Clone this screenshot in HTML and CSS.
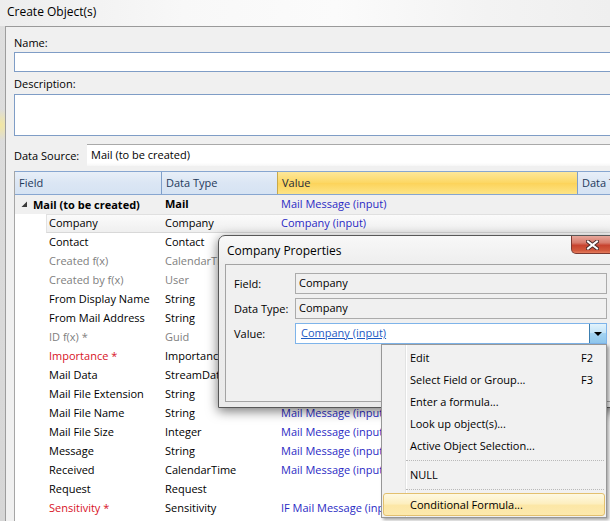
FILE: index.html
```html
<!DOCTYPE html>
<html>
<head>
<meta charset="utf-8">
<title>Create Object(s)</title>
<link rel="stylesheet" href="styles.css">
</head>
<body>
<div class="win">
  <div class="titlebar">Create Object(s)</div>
  <div class="client">
    <div class="lbl lbl-name">Name:</div>
    <div class="input"></div>
    <div class="lbl lbl-desc">Description:</div>
    <div class="textarea"></div>
    <div class="ds-row">
      <span class="ds-label">Data Source:</span>
      <div class="combo">Mail (to be created)</div>
    </div>
    <div class="grid">
      <div class="hdr">
        <div class="hc">Field</div>
        <div class="hc sep">Data Type</div>
        <div class="hc sep active">Value</div>
        <div class="hc sep">Data Type</div>
      </div>
      <div class="row group">
        <div class="cell f top"><svg class="arrow" width="7" height="7" viewBox="0 0 7 7"><polygon points="6,0.5 6,6 0.5,6" fill="#3a3a3a"/></svg><b>Mail (to be created)</b></div>
        <div class="cell t"><b>Mail</b></div>
        <div class="cell v">Mail Message (input)</div>
        <div class="cell"></div>
      </div>
      <div class="row sel">
        <div class="cell f">Company</div><div class="cell t">Company</div><div class="cell v">Company (input)</div><div class="cell"></div>
      </div>
      <div class="row">
        <div class="cell f">Contact</div><div class="cell t">Contact</div><div class="cell v"></div><div class="cell"></div>
      </div>
      <div class="row gray">
        <div class="cell f">Created f(x)</div><div class="cell t">CalendarTime</div><div class="cell v"></div><div class="cell"></div>
      </div>
      <div class="row gray">
        <div class="cell f">Created by f(x)</div><div class="cell t">User</div><div class="cell v"></div><div class="cell"></div>
      </div>
      <div class="row">
        <div class="cell f">From Display Name</div><div class="cell t">String</div><div class="cell v"></div><div class="cell"></div>
      </div>
      <div class="row">
        <div class="cell f">From Mail Address</div><div class="cell t">String</div><div class="cell v"></div><div class="cell"></div>
      </div>
      <div class="row gray">
        <div class="cell f">ID f(x) *</div><div class="cell t">Guid</div><div class="cell v"></div><div class="cell"></div>
      </div>
      <div class="row">
        <div class="cell f red">Importance *</div><div class="cell t">Importance</div><div class="cell v"></div><div class="cell"></div>
      </div>
      <div class="row">
        <div class="cell f">Mail Data</div><div class="cell t">StreamData</div><div class="cell v"></div><div class="cell"></div>
      </div>
      <div class="row">
        <div class="cell f">Mail File Extension</div><div class="cell t">String</div><div class="cell v"></div><div class="cell"></div>
      </div>
      <div class="row">
        <div class="cell f">Mail File Name</div><div class="cell t">String</div><div class="cell v">Mail Message (input)</div><div class="cell"></div>
      </div>
      <div class="row">
        <div class="cell f">Mail File Size</div><div class="cell t">Integer</div><div class="cell v">Mail Message (input)</div><div class="cell"></div>
      </div>
      <div class="row">
        <div class="cell f">Message</div><div class="cell t">String</div><div class="cell v">Mail Message (input)</div><div class="cell"></div>
      </div>
      <div class="row">
        <div class="cell f">Received</div><div class="cell t">CalendarTime</div><div class="cell v">Mail Message (input)</div><div class="cell"></div>
      </div>
      <div class="row">
        <div class="cell f">Request</div><div class="cell t">Request</div><div class="cell v"></div><div class="cell"></div>
      </div>
      <div class="row">
        <div class="cell f red">Sensitivity *</div><div class="cell t">Sensitivity</div><div class="cell v">IF Mail Message (input)</div><div class="cell"></div>
      </div>
    </div>
  </div>

  <div class="popup">
    <div class="popup-title">Company Properties</div>
    <div class="close"><svg width="13" height="10" viewBox="0 0 13 10"><path d="M2 1.5 L11 8.5 M11 1.5 L2 8.5" stroke="#4a2a28" stroke-width="4" stroke-linecap="square"/><path d="M2 1.5 L11 8.5 M11 1.5 L2 8.5" stroke="#ffffff" stroke-width="2" stroke-linecap="square"/></svg></div>
    <div class="inner">
      <div class="prow"><span class="plbl">Field:</span><div class="pbox">Company</div></div>
      <div class="prow"><span class="plbl">Data Type:</span><div class="pbox">Company</div></div>
      <div class="prow"><span class="plbl">Value:</span><div class="vcombo"><span class="vlink">Company (input)</span><span class="dd"><span class="tri"></span></span></div></div>
    </div>
  </div>

  <div class="menu">
    <div class="mi"><span>Edit</span><span class="sc">F2</span></div>
    <div class="mi"><span>Select Field or Group...</span><span class="sc">F3</span></div>
    <div class="mi"><span>Enter a formula...</span></div>
    <div class="mi"><span>Look up object(s)...</span></div>
    <div class="mi"><span>Active Object Selection...</span></div>
    <div class="msep"></div>
    <div class="mi"><span>NULL</span></div>
    <div class="msep"></div>
    <div class="mi hot"><span>Conditional Formula...</span></div>
  </div>
</div>
</body>
</html>
```
FILE: styles.css
```css
* { box-sizing: border-box; margin: 0; padding: 0; }
html, body { width: 610px; height: 521px; overflow: hidden; }
body {
  font-family: "Open Sans", "Noto Sans", sans-serif;
  font-size: 11px;
  color: #000;
  background: #dcdcdc;
}
.win {
  position: relative;
  width: 610px;
  height: 521px;
  overflow: hidden;
  background: radial-gradient(circle at 0 125px, #f3e7a0 0, rgba(243,231,160,0) 16px), linear-gradient(#dedede, #d6d6d6);
}
.titlebar {
  height: 26px;
  line-height: 24px;
  padding-left: 7px;
  font-size: 12px;
  background: linear-gradient(90deg, #ededed 0, #f8f8f8 30%, #fbfbfb 55%, #f3f3f3 80%, #efefef 100%);
}
.client {
  margin-left: 5px;
  width: 620px;
  height: 495px;
  border-top: 1px solid #9a9a9a;
  border-left: 1px solid #9d9d9d;
  background: #f0f0f0;
  padding: 7px 0 0 8px;
}
.lbl-name { line-height: 17px; margin-bottom: 1px; }
.lbl-desc { line-height: 16px; margin-top: 4px; margin-bottom: 2px; }
.input {
  height: 20px;
  background: #fff;
  border: 1px solid #7f9dc6;
}
.textarea {
  height: 42px;
  background: #fff;
  border: 1px solid #7f9dc6;
}
.ds-row {
  display: flex;
  align-items: center;
  padding-top: 8px;
  height: 30px;
  margin-bottom: 5px;
}
.ds-label { width: 73px; }
.combo {
  flex: 1;
  height: 22px;
  line-height: 20px;
  padding-left: 4px;
  background: linear-gradient(#ffffff, #ffffff 85%, #f6f6f6);
  border-top: 1px solid #a9a9a9;
}
.grid {
  border-left: 1px solid #a6a6a6;
  background: #fff;
  height: 360px;
}
.hdr, .row {
  display: grid;
  grid-template-columns: 146px 116px 300px 1fr;
}
.hdr {
  height: 24px;
  border-top: 1px solid #87a6d0;
  border-bottom: 1px solid #87a6d0;
  background: linear-gradient(#e8eff8, #dbe6f4 50%, #d6e3f3);
  color: #1e395b;
}
.hc {
  line-height: 21px;
  padding-left: 4px;
  white-space: nowrap;
  overflow: hidden;
}
.hc.sep { border-left: 1px solid #7f9fca; }
.hc.active {
  background: linear-gradient(#fde79a, #fcd762 50%, #fcd35a 51%, #fde486);
  border-left-color: #c9a94a;
  color: #1e2a3b;
}
.row {
  position: relative;
  height: 19px;
  line-height: 18px;
}
.row.group { background: #f0f0f0; }
.row.sel::before {
  content: "";
  position: absolute;
  left: 31px; right: 0; top: 0; bottom: 0;
  background: linear-gradient(#fbfbfb, #efefef);
  border-top: 1px solid #e0e0e0;
  border-bottom: 1px solid #d8d8d8;
  border-left: 1px solid #e2e2e2;
}
.cell {
  position: relative;
  white-space: nowrap;
  overflow: hidden;
  padding-left: 4px;
}
.cell.f { padding-left: 34px; }
.cell.f.top { padding-left: 6px; display: flex; align-items: center; }
.arrow { margin-right: 5px; flex: none; }
.cell.v { color: #2a2ac4; }
.row.gray .f, .row.gray .t { color: #808080; }
.cell.red { color: #d8131f; }

/* popup dialog */
.popup {
  position: absolute;
  left: 218px;
  top: 235px;
  width: 400px;
  height: 173px;
  border: 1px solid #575757;
  border-radius: 7px 7px 0 0;
  background: linear-gradient(#f8f8f8, #eeeeee 28px, #eaeaea);
  box-shadow: 0 3px 12px rgba(0,0,0,0.55);
  padding: 0 6px 6px 6px;
}
.popup-title {
  height: 28px;
  line-height: 29px;
  padding-left: 2px;
  font-size: 12px;
}
.close {
  position: absolute;
  left: 352px;
  top: 0;
  width: 43px;
  height: 18px;
  border: 1px solid #7c3a32;
  border-top: none;
  border-radius: 0 0 5px 5px;
  background: linear-gradient(#e7a79b, #d77b6c 40%, #c7432f 55%, #d25a3e 85%, #e47c5e);
  display: flex;
  align-items: center;
  justify-content: center;
}
.inner {
  height: 138px;
  border: 1px solid #a3a3a3;
  background: #f0f0f0;
  padding: 8px 0 0 8px;
  display: flex;
  flex-direction: column;
  gap: 4px;
}
.prow {
  display: flex;
  align-items: center;
  height: 21px;
}
.plbl { width: 61px; flex: none; }
.pbox {
  width: 312px;
  height: 21px;
  line-height: 18px;
  padding-left: 3px;
  background: #f0f0f0;
  border: 1px solid #ababab;
}
.vcombo {
  width: 312px;
  height: 21px;
  display: flex;
  background: #fff;
  border: 1px solid #7eb4ea;
}
.vlink {
  flex: 1;
  line-height: 18px;
  padding-left: 5px;
  color: #1e5ac3;
  text-decoration: underline;
}
.dd {
  width: 17px;
  border-left: 1px solid #3c7fb1;
  background: linear-gradient(#e3f3fc, #c4e4f8 45%, #a4d3f1 50%, #8fc6ec);
  display: flex;
  align-items: center;
  justify-content: center;
}
.tri {
  width: 0; height: 0;
  border-left: 4px solid transparent;
  border-right: 4px solid transparent;
  border-top: 4px solid #000;
}

/* context menu */
.menu {
  position: absolute;
  left: 381px;
  top: 344px;
  width: 226px;
  height: 174px;
  border: 1px solid #979797;
  padding: 2px;
  background: linear-gradient(90deg, rgba(0,0,0,0) 23px, #e2e3e3 23px, #e2e3e3 24px, #ffffff 24px, #ffffff 25px, rgba(0,0,0,0) 25px), #f1f1f1;
  box-shadow: 2px 2px 3px rgba(0,0,0,0.35);
}
.mi {
  height: 22px;
  line-height: 22px;
  padding: 0 11px 0 26px;
  display: flex;
  justify-content: space-between;
  white-space: nowrap;
}
.msep {
  height: 7px;
  margin-left: 22px;
  padding-top: 3px;
}
.msep::after {
  content: "";
  display: block;
  border-top: 1px dotted #b9b9b9;
}
.mi.hot {
  margin: 0 -1px;
  height: 23px;
  line-height: 21px;
  padding-left: 26px;
  border: 1px solid #e3c06e;
  border-radius: 3px;
  background: linear-gradient(#fef9e2, #fdefc0 45%, #fce7a6 55%, #fde9ad);
}
```
